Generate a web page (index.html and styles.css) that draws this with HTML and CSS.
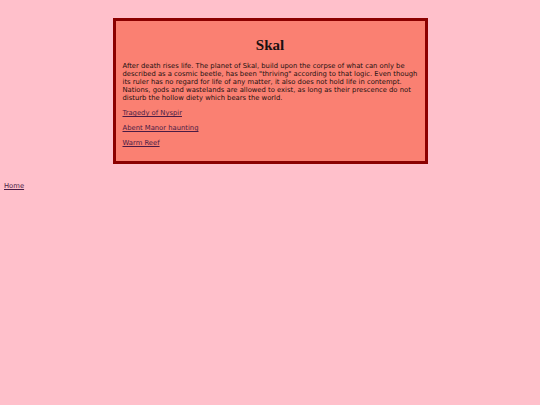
FILE: index.html
```html
<!DOCTYPE html>
<html>
<head>
<meta charset="utf-8">
<title>Skal</title>
<link rel="stylesheet" href="styles.css">
</head>
<body>
<div class="card">
  <h1 class="title">Skal</h1>
  <p class="lore">After death rises life. The planet of Skal, build upon the corpse of what can only be described as a cosmic beetle, has been "thriving" according to that logic. Even though its ruler has no regard for life of any matter, it also does not hold life in contempt. Nations, gods and wastelands are allowed to exist, as long as their prescence do not disturb the hollow diety which bears the world.</p>
  <p class="link-row"><a href="#">Tragedy of Nyspir</a></p>
  <p class="link-row"><a href="#">Abent Manor haunting</a></p>
  <p class="link-row"><a href="#">Warm Reef</a></p>
</div>
<a class="home" href="#">Home</a>
</body>
</html>
```

FILE: styles.css
```css
html {
  background: #ffc0cb;
}
body {
  margin: 0;
  padding: 18px 4px 0;
  font-family: "DejaVu Sans", Verdana, sans-serif;
  font-size: 6.8px;
  line-height: 8px;
  color: #1a1010;
}
.card {
  width: 295px;
  margin: 0 auto;
  padding: 0 7px 14px;
  background: #fa8072;
  border: 3px solid #8b0000;
}
.title {
  margin: 0;
  padding-top: 16px;
  font-family: "Liberation Serif", "Times New Roman", serif;
  font-size: 15px;
  line-height: 16px;
  text-align: center;
  color: #1a1010;
}
.lore {
  margin: 9px 0 0;
}
.link-row {
  margin: 7px 0 0;
}
a {
  color: #4b1c45;
}
.home {
  display: inline-block;
  margin-top: 18px;
}
```
